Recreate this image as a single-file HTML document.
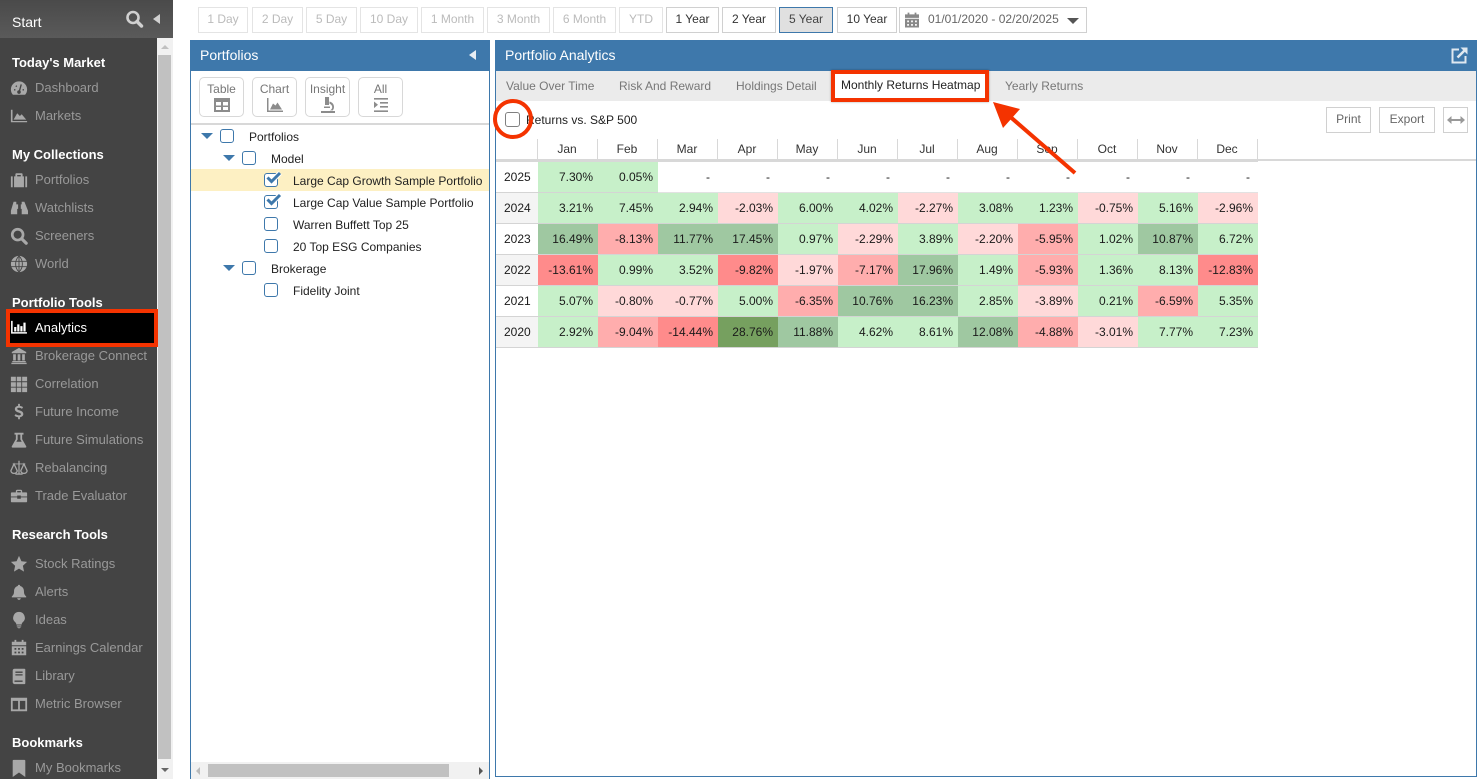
<!DOCTYPE html>
<html><head><meta charset="utf-8"><title>Portfolio Analytics</title>
<style>
*{box-sizing:border-box}
html,body{margin:0;padding:0;width:1477px;height:779px;overflow:hidden;background:#fff;font-family:"Liberation Sans",sans-serif;font-size:12px;color:#222}
.a{position:absolute}
#side{position:absolute;left:0;top:0;width:157px;height:779px;background:#444}
#start{position:absolute;left:0;top:0;width:173px;height:38px;background:linear-gradient(#4a4a4a,#5a5a5a);color:#fff;font-size:14px;line-height:44px;padding-left:12px}
.h{position:absolute;left:12px;height:20px;margin-top:1px;line-height:20px;color:#fff;font-weight:bold;font-size:13px;white-space:nowrap}
.n{position:absolute;left:35px;height:20px;margin-top:1px;line-height:20px;color:#999;font-size:13px;white-space:nowrap}
.i{position:absolute;left:10px;width:18px;height:18px;margin-top:2px;fill:#a8a8a8}
.b{position:absolute;top:7px;height:26px;border:1px solid #e4e4e4;background:#fff;color:#bbb;text-align:center;line-height:23px;white-space:nowrap}
.b.on{border-color:#d0d0d0;color:#333}
.hd{position:absolute;top:40px;height:31px;background:#3e78ab;color:#fff;font-size:14px;line-height:31px;padding-left:10px}
.tb{position:absolute;top:77px;width:45px;height:40px;border:1px solid #d8d8d8;border-radius:5px;text-align:center;color:#777;line-height:22px}
.tb svg{position:absolute;left:13px;top:19px;width:18px;height:16px;fill:#8c8c8c}
.cb{position:absolute;width:14px;height:14px;border:1.5px solid #3e78ab;border-radius:3px;background:#fff}
.t{position:absolute;height:18px;margin-top:1px;line-height:18px;color:#222;white-space:nowrap}
.tr{position:absolute;width:0;height:0;border-left:6px solid transparent;border-right:6px solid transparent;border-top:6px solid #3e78ab}
.tab{position:absolute;top:71px;height:30px;line-height:30px;color:#777;white-space:nowrap}
#tbl{position:absolute;left:496px;top:139px;border-collapse:separate;border-spacing:0;table-layout:fixed;width:762px}
#tbl th{height:23px;padding:0 1px 0 0;font-weight:normal;color:#333;text-align:center;border-right:1px solid #d8d8d8;border-bottom:3px solid #d8d8d8}
#tbl td{height:31px;padding:0 5px 0 0;text-align:right;border-bottom:1px solid #d4d4d4;color:#1a1a1a}
#tbl td.y{text-align:left;padding-left:8px}
#tbl td.d{padding-right:8px;border-bottom-color:#e2e2e2}
.g1{background:#c7f0c9}.g2{background:#9fc8a1}.g3{background:#76a05f}
.r1{background:#ffd9d9}.r2{background:#ffadad}.r3{background:#ff8b8b}
.w{background:#fff}.s{background:#f4f4f4}
</style></head><body>

<div id="side"></div>
<div id="start">Start</div>
<svg class="a" style="left:125px;top:10px" width="19" height="18" viewBox="0 0 19 18"><circle cx="8" cy="7.500" r="5.500" fill="none" stroke="#d0d0d0" stroke-width="2.600"/><path d="M12 11.500l4.500 4.500" stroke="#d0d0d0" stroke-width="3.400" stroke-linecap="round"/></svg>
<div class="a" style="left:153px;top:14px;width:0;height:0;border-top:5px solid transparent;border-bottom:5px solid transparent;border-right:7px solid #d0d0d0"></div>

<div class="a" style="left:157px;top:38px;width:16px;height:741px;background:#f1f1f1"></div>
<div class="a" style="left:158px;top:55px;width:13px;height:704px;background:#c1c1c1"></div>
<div class="a" style="left:161px;top:45px;width:0;height:0;border-left:4px solid transparent;border-right:4px solid transparent;border-bottom:4px solid #c0c0c0"></div>
<div class="a" style="left:161px;top:768px;width:0;height:0;border-left:4px solid transparent;border-right:4px solid transparent;border-top:4px solid #666"></div>

<div class="h" style="top:52px">Today's Market</div>
<div class="n" style="top:77px">Dashboard</div>
<svg class="i" style="top:77px" viewBox="0 0 20 20"><path d="M3.200 17.500A9 9 0 1 1 16.800 17.500z"/><path d="M10 15L12.500 6M4.500 12h1.500M6.500 7.500l1 1M14 12h1.500" stroke="#444" stroke-width="1.500" fill="none"/><circle cx="10" cy="14.500" r="2" fill="#444"/></svg>
<div class="n" style="top:105px">Markets</div>
<svg class="i" style="top:105px" viewBox="0 0 20 20"><path d="M1 3h1.800v12.500H19V17H1zM4 14l4-7 3 3 2-2 5 6z"/></svg>

<div class="h" style="top:144px">My Collections</div>
<div class="n" style="top:169px">Portfolios</div>
<svg class="i" style="top:169px" viewBox="0 0 20 20"><path d="M1 6h2v12H1zM4.500 6H6V3.500C6 3 6.500 2.500 7 2.500h6c.5 0 1 .5 1 1V6h1.500v12h-11zM8 6h4V4.500H8zM17 6h2v12h-2z" fill-rule="evenodd"/></svg>
<div class="n" style="top:197px">Watchlists</div>
<svg class="i" style="top:197px" viewBox="0 0 20 20"><path d="M4 3h3v3h2v5H8v6H1v-4zM13 3h3l4 10v4h-7v-6h-1V6h1z"/></svg>
<div class="n" style="top:225px">Screeners</div>
<svg class="i" style="top:225px" viewBox="0 0 20 20"><circle cx="8.500" cy="8.500" r="6" fill="none" stroke="#a8a8a8" stroke-width="3"/><path d="M13 13l5 5" stroke="#a8a8a8" stroke-width="3.500" stroke-linecap="round"/></svg>
<div class="n" style="top:253px">World</div>
<svg class="i" style="top:253px" viewBox="0 0 20 20"><circle cx="10" cy="10" r="9"/><path d="M1 7h18M1 13h18M10 1v18M10 1c-5 5-5 13 0 18M10 1c5 5 5 13 0 18" stroke="#444" fill="none"/></svg>

<div class="h" style="top:292px">Portfolio Tools</div>
<div class="a" style="left:6px;top:309px;width:152px;height:38px;background:#000;border:4px solid #f43300"></div>
<div class="n" style="top:317px;color:#fff">Analytics</div>
<svg class="a" style="left:10px;top:320px" width="18" height="15" viewBox="0 0 20 17" fill="#fff"><path d="M1 1h1.800v12.700H19v1.800H1zM4.500 8h2.500v5H4.500zM8 5h2.500v8H8zM11.500 7H14v6h-2.500zM15 3h2.500v10H15z"/></svg>
<div class="n" style="top:345px">Brokerage Connect</div>
<svg class="i" style="top:345px" viewBox="0 0 20 20"><path d="M10 1l8 4.500V7H2V5.500zM3.500 8h3v7h-3zM8.500 8h3v7h-3zM13.500 8h3v7h-3zM2.500 15.500h15V17h-15zM1.500 17.500h17V19h-17z"/></svg>
<div class="n" style="top:373px">Correlation</div>
<svg class="i" style="top:373px" viewBox="0 0 20 20"><path d="M1 2h5.500v5H1zM7.500 2h5v5h-5zM13.500 2H19v5h-5.500zM1 8h5.500v5H1zM7.500 8h5v5h-5zM13.500 8H19v5h-5.500zM1 14h5.500v5H1zM7.500 14h5v5h-5zM13.500 14H19v5h-5.500z"/></svg>
<div class="n" style="top:401px">Future Income</div>
<svg class="i" style="top:401px" viewBox="0 0 20 20"><path d="M9 1h2v2.200c1.500.2 2.800.8 3.500 1.500l-1.200 1.800c-1-.8-2-1.200-3.300-1.200-1.200 0-2 .5-2 1.200 0 2 6.800 1.300 6.800 5.700 0 2-1.500 3.200-3.800 3.600V18H9v-2.200c-1.700-.2-3.200-.9-4-1.800l1.300-1.700c1 .9 2.300 1.400 3.700 1.400 1.400 0 2.200-.5 2.200-1.400C12.200 10.300 5.400 10.900 5.400 6.600c0-1.800 1.400-3 3.600-3.400z"/></svg>
<div class="n" style="top:429px">Future Simulations</div>
<svg class="i" style="top:429px" viewBox="0 0 20 20"><path d="M5 2h10v2h-1.500v5l4.500 8c.4.800 0 1.500-1 1.500H3c-1 0-1.400-.7-1-1.500l4.500-8V4H5zM8.500 4v5.500L7 12h6l-1.500-2.500V4z" fill-rule="evenodd"/></svg>
<div class="n" style="top:457px">Rebalancing</div>
<svg class="i" style="top:457px" viewBox="0 0 20 20"><path d="M9.300 2h1.400v14H14v1.500H6V16h3.300zM3 5h14v1H3z"/><path d="M4.500 5.500L1 13a3.500 3 0 0 0 7 0zM15.500 5.500L12 13a3.500 3 0 0 0 7 0z" fill="none" stroke="#a8a8a8" stroke-width="1.400"/></svg>
<div class="n" style="top:485px">Trade Evaluator</div>
<svg class="i" style="top:485px" viewBox="0 0 20 20"><path d="M6.500 4.500C6.500 3.500 7.300 3 8 3h4c.8 0 1.500.5 1.500 1.500V6H18c.6 0 1 .4 1 1v3.500H12V9.500H8v1H1V7c0-.6.4-1 1-1h4.500zM8 6h4V4.500H8zM1 11.500h7V13h4v-1.500h7V16c0 .6-.4 1-1 1H2c-.6 0-1-.4-1-1z" fill-rule="evenodd"/></svg>

<div class="h" style="top:524px">Research Tools</div>
<div class="n" style="top:553px">Stock Ratings</div>
<svg class="i" style="top:553px" viewBox="0 0 20 20"><path d="M10 1l2.700 6 6.300.7-4.700 4.300 1.300 6.500-5.600-3.300-5.600 3.300 1.300-6.500L1 7.700 7.300 7z"/></svg>
<div class="n" style="top:581px">Alerts</div>
<svg class="i" style="top:581px" viewBox="0 0 20 20"><path d="M10 2c.8 0 1.300.6 1.300 1.300C14 4 15.500 6.200 15.500 9c0 3.500 1 4.500 2.500 6v1H2v-1c1.500-1.500 2.500-2.500 2.500-6 0-2.800 1.500-5 4.200-5.700C8.700 2.600 9.200 2 10 2zM8 17h4c0 1-1 1.800-2 1.800S8 18 8 17z"/></svg>
<div class="n" style="top:609px">Ideas</div>
<svg class="i" style="top:609px" viewBox="0 0 20 20"><path d="M10 1a6.500 6.500 0 0 1 4 11.600c-.7.700-1 1.400-1 2.400H7c0-1-.3-1.700-1-2.400A6.500 6.500 0 0 1 10 1zM7.500 16h5v1.200h-5zM8 18h4c-.3.800-1 1.200-2 1.200S8.300 18.800 8 18z"/></svg>
<div class="n" style="top:637px">Earnings Calendar</div>
<svg class="i" style="top:637px" viewBox="0 0 20 20"><path d="M5 1h2v2h6V1h2v2h3v4H2V3h3zM2 8h16v10H2zM5 10v2h2v-2zM9 10v2h2v-2zM13 10v2h2v-2zM5 14v2h2v-2zM9 14v2h2v-2zM13 14v2h2v-2z" fill-rule="evenodd"/></svg>
<div class="n" style="top:665px">Library</div>
<svg class="i" style="top:665px" viewBox="0 0 20 20"><path d="M5 2h11c.6 0 1 .4 1 1v15c0 .6-.4 1-1 1H5c-1 0-2-.9-2-2V4c0-1.100 1-2 2-2zM6 5v1.500h8V5zM6 8v1.500h8V8zM5 15v1.500h9V15z" fill-rule="evenodd"/></svg>
<div class="n" style="top:693px">Metric Browser</div>
<svg class="i" style="top:693px" viewBox="0 0 20 20"><path d="M1 3h18v15H1zM3 6.500V16h6V6.500zM11 6.500V16h6V6.500z" fill-rule="evenodd"/></svg>

<div class="h" style="top:732px">Bookmarks</div>
<div class="n" style="top:757px">My Bookmarks</div>
<svg class="i" style="top:757px" viewBox="0 0 20 20"><path d="M4 1h12c.5 0 1 .4 1 1v18l-7-5-7 5V2c0-.6.500-1 1-1z"/></svg>

<div class="b" style="left:198px;width:50px">1 Day</div>
<div class="b" style="left:252px;width:51px">2 Day</div>
<div class="b" style="left:306px;width:51px">5 Day</div>
<div class="b" style="left:360px;width:58px">10 Day</div>
<div class="b" style="left:421px;width:63px">1 Month</div>
<div class="b" style="left:487px;width:63px">3 Month</div>
<div class="b" style="left:553px;width:63px">6 Month</div>
<div class="b" style="left:619px;width:44px">YTD</div>
<div class="b on" style="left:666px;width:53px">1 Year</div>
<div class="b on" style="left:722px;width:54px">2 Year</div>
<div class="b" style="left:779px;width:54px;background:#e0e0e0;border-color:#3e78ab;color:#444">5 Year</div>
<div class="b on" style="left:837px;width:60px">10 Year</div>
<div class="b on" style="left:899px;width:188px;text-align:left;padding-left:28px;color:#666">01/01/2020 - 02/20/2025</div>
<svg class="a" style="left:905px;top:12px" width="14" height="16" viewBox="0 0 16 17" fill="#888"><path d="M3 0h2v2h6V0h2v2h3v4H0V2h3zM0 7h16v10H0zM2.500 9v2h2V9zM7 9v2h2V9zM11.500 9v2h2V9zM2.500 13v2h2v-2zM7 13v2h2v-2zM11.500 13v2h2v-2z" fill-rule="evenodd"/></svg>
<div class="a" style="left:1067px;top:18px;width:0;height:0;border-left:6px solid transparent;border-right:6px solid transparent;border-top:6px solid #555"></div>

<div class="a" style="left:190px;top:40px;width:300px;height:739px;border:1px solid #3e78ab;border-bottom:0"></div>
<div class="hd" style="left:190px;width:300px">Portfolios</div>
<div class="a" style="left:469px;top:50px;width:0;height:0;border-top:5px solid transparent;border-bottom:5px solid transparent;border-right:7px solid #e8eef4"></div>

<div class="tb" style="left:199px">Table<svg viewBox="0 0 18 16"><path d="M1 1h16v14H1zM3 5v3.500h5V5zM10 5v3.500h5V5zM3 10v3h5v-3zM10 10v3h5v-3z" fill-rule="evenodd"/></svg></div>
<div class="tb" style="left:252px">Chart<svg viewBox="0 0 18 16"><path d="M1 1h1.500v12.500H17V15H1zM4 12.500l3-6 2.500 2 2-3 4.500 7z"/></svg></div>
<div class="tb" style="left:305px">Insight<svg viewBox="0 0 18 16"><path d="M6 0h4v8H6zM10.500 4.500c3 .8 4.500 3 4.500 5.500 0 1.400-.5 2.500-1.200 3.400H10c2 0 3.200-1.500 3.200-3.400 0-1.500-1-2.700-2.700-3.300zM5 9.500h6v1.500H5zM2 14h14v2H2z"/></svg></div>
<div class="tb" style="left:358px">All<svg viewBox="0 0 18 16"><path d="M2 1h14v1.600H2zM8 5h8v1.600H8zM8 9h8v1.600H8zM2 13.400h14V15H2zM2 4.500l4 3.300-4 3.300z"/></svg></div>
<div class="a" style="left:191px;top:123px;width:298px;height:2px;background:#d8d8d8"></div>

<div class="a" style="left:191px;top:169px;width:298px;height:22px;background:#fdf0c3"></div>
<div class="tr" style="left:201px;top:133px"></div><div class="cb" style="left:220px;top:129px"></div><div class="t" style="left:249px;top:127px">Portfolios</div>
<div class="tr" style="left:223px;top:155px"></div><div class="cb" style="left:242px;top:151px"></div><div class="t" style="left:271px;top:149px">Model</div>
<div class="cb" style="left:264px;top:173px"></div><div class="t" style="left:293px;top:171px">Large Cap Growth Sample Portfolio</div>
<div class="cb" style="left:264px;top:195px"></div><div class="t" style="left:293px;top:193px">Large Cap Value Sample Portfolio</div>
<svg class="a" style="left:265px;top:171px" width="17" height="14" viewBox="0 0 17 14"><path d="M2.500 6.500l4 4L15 2" fill="none" stroke="#fff" stroke-width="5"/><path d="M2.500 6.500l4 4L15 2" fill="none" stroke="#3e78ab" stroke-width="3"/></svg>
<svg class="a" style="left:265px;top:193px" width="17" height="14" viewBox="0 0 17 14"><path d="M2.500 6.500l4 4L15 2" fill="none" stroke="#fff" stroke-width="5"/><path d="M2.500 6.500l4 4L15 2" fill="none" stroke="#3e78ab" stroke-width="3"/></svg>
<div class="cb" style="left:264px;top:217px"></div><div class="t" style="left:293px;top:215px">Warren Buffett Top 25</div>
<div class="cb" style="left:264px;top:239px"></div><div class="t" style="left:293px;top:237px">20 Top ESG Companies</div>
<div class="tr" style="left:223px;top:265px"></div><div class="cb" style="left:242px;top:261px"></div><div class="t" style="left:271px;top:259px">Brokerage</div>
<div class="cb" style="left:264px;top:283px"></div><div class="t" style="left:293px;top:281px">Fidelity Joint</div>

<div class="a" style="left:191px;top:762px;width:298px;height:17px;background:#f1f1f1"></div>
<div class="a" style="left:208px;top:764px;width:241px;height:13px;background:#c1c1c1"></div>
<div class="a" style="left:196px;top:767px;width:0;height:0;border-top:4px solid transparent;border-bottom:4px solid transparent;border-right:4px solid #bbb"></div>
<div class="a" style="left:479px;top:767px;width:0;height:0;border-top:4px solid transparent;border-bottom:4px solid transparent;border-left:4px solid #555"></div>

<div class="a" style="left:495px;top:40px;width:982px;height:737px;border:1px solid #3e78ab"></div>
<div class="hd" style="left:495px;width:982px">Portfolio Analytics</div>
<svg class="a" style="left:1451px;top:47px" width="17" height="17" viewBox="0 0 17 17"><path d="M8 2.500H1.500v13h13V9" fill="none" stroke="#dfe8f0" stroke-width="2"/><path d="M6.500 10.500L14 3" stroke="#dfe8f0" stroke-width="2.500"/><path d="M9.500 0.500H16.500V7.500z" fill="#dfe8f0"/></svg>

<div class="a" style="left:496px;top:71px;width:980px;height:30px;background:#ebebeb"></div>
<div class="tab" style="left:506px">Value Over Time</div>
<div class="tab" style="left:619px">Risk And Reward</div>
<div class="tab" style="left:736px">Holdings Detail</div>
<div class="tab" style="left:1005px">Yearly Returns</div>
<div class="a" style="left:831px;top:70px;width:158px;height:32px;background:#fff;border:4px solid #f43300;box-shadow:0 0 2px rgba(0,0,0,.35)"></div>
<div class="tab" style="left:841px;top:70px;color:#222">Monthly Returns Heatmap</div>

<div class="t" style="left:526px;top:110px">Returns vs. S&amp;P 500</div>
<div class="cb" style="left:505px;top:112px;width:15px;height:15px;border-color:#808080"></div>
<svg class="a" style="left:490px;top:97px" width="46" height="45" viewBox="0 0 46 45"><circle cx="23" cy="22" r="18" fill="none" stroke="#f43300" stroke-width="4"/></svg>

<div class="b on" style="left:1326px;top:107px;width:45px;color:#666">Print</div>
<div class="b on" style="left:1379px;top:107px;width:56px;color:#666">Export</div>
<div class="b on" style="left:1443px;top:107px;width:25px"></div>
<svg class="a" style="left:1447px;top:115px" width="18" height="10" viewBox="0 0 18 10" fill="#999"><path d="M0 5l4.500-4v3h9V1L18 5l-4.500 4V6h-9v3z"/></svg>

<div class="a" style="left:1258px;top:159px;width:218px;height:2px;background:#d8d8d8"></div>
<table id="tbl"><colgroup><col style="width:42px"><col span="12" style="width:60px"></colgroup>
<tr><th></th><th>Jan</th><th>Feb</th><th>Mar</th><th>Apr</th><th>May</th><th>Jun</th><th>Jul</th><th>Aug</th><th>Sep</th><th>Oct</th><th>Nov</th><th>Dec</th></tr>
<tr><td class="y w">2025</td><td class="g1">7.30%</td><td class="g1">0.05%</td><td class="d">-</td><td class="d">-</td><td class="d">-</td><td class="d">-</td><td class="d">-</td><td class="d">-</td><td class="d">-</td><td class="d">-</td><td class="d">-</td><td class="d">-</td></tr>
<tr><td class="y s">2024</td><td class="g1">3.21%</td><td class="g1">7.45%</td><td class="g1">2.94%</td><td class="r1">-2.03%</td><td class="g1">6.00%</td><td class="g1">4.02%</td><td class="r1">-2.27%</td><td class="g1">3.08%</td><td class="g1">1.23%</td><td class="r1">-0.75%</td><td class="g1">5.16%</td><td class="r1">-2.96%</td></tr>
<tr><td class="y w">2023</td><td class="g2">16.49%</td><td class="r2">-8.13%</td><td class="g2">11.77%</td><td class="g2">17.45%</td><td class="g1">0.97%</td><td class="r1">-2.29%</td><td class="g1">3.89%</td><td class="r1">-2.20%</td><td class="r2">-5.95%</td><td class="g1">1.02%</td><td class="g2">10.87%</td><td class="g1">6.72%</td></tr>
<tr><td class="y s">2022</td><td class="r3">-13.61%</td><td class="g1">0.99%</td><td class="g1">3.52%</td><td class="r3">-9.82%</td><td class="r1">-1.97%</td><td class="r2">-7.17%</td><td class="g2">17.96%</td><td class="g1">1.49%</td><td class="r2">-5.93%</td><td class="g1">1.36%</td><td class="g1">8.13%</td><td class="r3">-12.83%</td></tr>
<tr><td class="y w">2021</td><td class="g1">5.07%</td><td class="r1">-0.80%</td><td class="r1">-0.77%</td><td class="g1">5.00%</td><td class="r2">-6.35%</td><td class="g2">10.76%</td><td class="g2">16.23%</td><td class="g1">2.85%</td><td class="r1">-3.89%</td><td class="g1">0.21%</td><td class="r2">-6.59%</td><td class="g1">5.35%</td></tr>
<tr><td class="y s">2020</td><td class="g1">2.92%</td><td class="r2">-9.04%</td><td class="r3">-14.44%</td><td class="g3">28.76%</td><td class="g2">11.88%</td><td class="g1">4.62%</td><td class="g1">8.61%</td><td class="g2">12.08%</td><td class="r2">-4.88%</td><td class="r1">-3.01%</td><td class="g1">7.77%</td><td class="g1">7.23%</td></tr>
</table>

<svg class="a" style="left:985px;top:95px" width="100" height="85" viewBox="0 0 100 85"><path d="M90 78L22 19" stroke="#f43300" stroke-width="4"/><path d="M8 7L35 14L18 33z" fill="#f43300"/></svg>
</body></html>
